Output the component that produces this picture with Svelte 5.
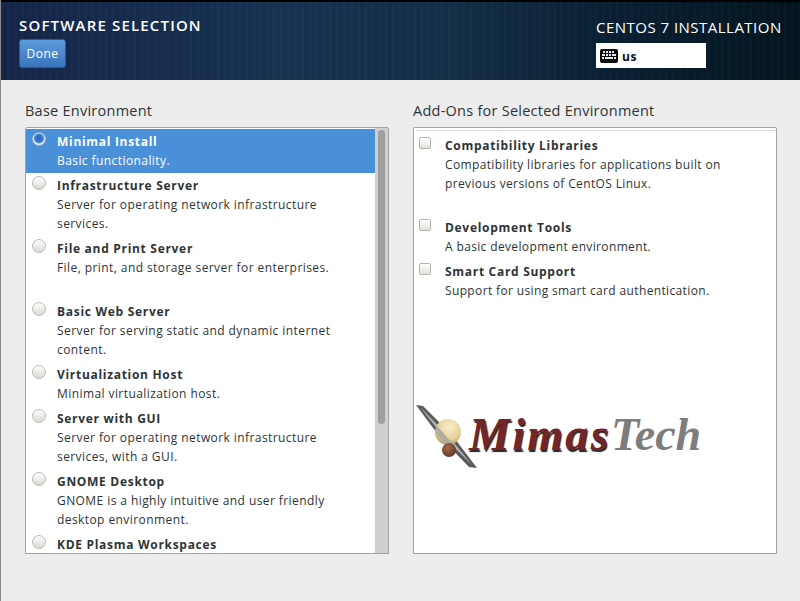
<script>
  const environments = [
    { name: "Minimal Install", desc: "Basic functionality.", selected: true },
    { name: "Infrastructure Server", desc: "Server for operating network infrastructure services." },
    { name: "File and Print Server", desc: "File, print, and storage server for enterprises.", tall: true },
    { name: "Basic Web Server", desc: "Server for serving static and dynamic internet content." },
    { name: "Virtualization Host", desc: "Minimal virtualization host." },
    { name: "Server with GUI", desc: "Server for operating network infrastructure services, with a GUI." },
    { name: "GNOME Desktop", desc: "GNOME is a highly intuitive and user friendly desktop environment." },
    { name: "KDE Plasma Workspaces", desc: "" },
  ];

  const addons = [
    { name: "Compatibility Libraries", desc: "Compatibility libraries for applications built on previous versions of CentOS Linux.", tall: true },
    { name: "Development Tools", desc: "A basic development environment." },
    { name: "Smart Card Support", desc: "Support for using smart card authentication." },
  ];
</script>

<div class="screen">
  <header class="topbar">
    <div class="left">
      <h1>SOFTWARE SELECTION</h1>
      <button class="done">Done</button>
    </div>
    <div class="right">
      <div class="product">CENTOS 7 INSTALLATION</div>
      <div class="layout-box">
        <svg viewBox="0 0 18 14" width="18" height="14">
          <rect width="18" height="14" rx="2" fill="#0c0c0c" />
          <g fill="#e8e8e8">
            <rect x="3" y="2" width="2" height="2" />
            <rect x="6" y="2" width="2" height="2" />
            <rect x="9" y="2" width="2" height="2" />
            <rect x="12" y="2" width="2" height="2" />
            <rect x="2" y="5" width="3" height="2" />
            <rect x="6" y="5" width="2" height="2" />
            <rect x="9" y="5" width="2" height="2" />
            <rect x="12" y="5" width="4" height="2" />
            <rect x="2" y="8" width="2" height="2" />
            <rect x="5" y="8" width="8" height="2" />
            <rect x="14" y="8" width="2" height="2" />
          </g>
        </svg>
        <span>us</span>
      </div>
    </div>
  </header>

  <main class="content">
    <section class="col">
      <h2>Base Environment</h2>
      <div class="list base">
        <div class="rows">
          {#each environments as env}
            <div class="row" class:selected={env.selected} class:tall={env.tall}>
              <span class="radio" class:on={env.selected}></span>
              <div class="text">
                <div class="name">{env.name}</div>
                {#if env.desc}<div class="desc">{env.desc}</div>{/if}
              </div>
            </div>
          {/each}
        </div>
        <div class="scrollbar"><div class="thumb"></div></div>
      </div>
    </section>

    <section class="col">
      <h2>Add-Ons for Selected Environment</h2>
      <div class="list addons">
        <div class="top-rule"></div>
        {#each addons as addon}
          <div class="row addon" class:tall-addon={addon.tall}>
            <span class="check"></span>
            <div class="text">
              <div class="name">{addon.name}</div>
              <div class="desc">{addon.desc}</div>
            </div>
          </div>
        {/each}

        <div class="logo">
          <svg viewBox="0 0 64 68" width="64" height="68">
            <defs>
              <radialGradient id="planet" cx="0.55" cy="0.3" r="0.8">
                <stop offset="0" stop-color="#f8eecb" />
                <stop offset="0.6" stop-color="#e6cf98" />
                <stop offset="1" stop-color="#a08a5c" />
              </radialGradient>
              <radialGradient id="moon" cx="0.4" cy="0.35" r="0.7">
                <stop offset="0" stop-color="#a8694a" />
                <stop offset="1" stop-color="#5e3526" />
              </radialGradient>
            </defs>
            <polygon points="1,0 8,1 37,30 62,63 54,62 24,31" fill="#5a5a5a" />
            <polygon points="5,2 9,6 36,34 57,60 27,30" fill="#b5b5b0" />
            <circle cx="33" cy="27" r="13" fill="url(#planet)" />
            <polygon points="21,20 38,39 32,41 21,28" fill="#aeaba0" />
            <circle cx="34" cy="45" r="7" fill="url(#moon)" />
          </svg>
          <span class="wordmark"><span class="mimas">Mimas</span><span class="tech">Tech</span></span>
        </div>
      </div>
    </section>
  </main>
</div>

<style>
  :global(body) {
    margin: 0;
    background: #ededed;
  }

  .screen {
    width: 800px;
    height: 601px;
    overflow: hidden;
    background: #ededed;
    font-family: "Open Sans", "Noto Sans", sans-serif;
    color: #2e3436;
    border-left: 1px solid #8a8a8a;
    box-sizing: border-box;
  }

  .topbar {
    height: 80px;
    box-sizing: border-box;
    border-top: 2px solid #000;
    margin-left: -1px;
    display: flex;
    justify-content: space-between;
    color: #fff;
    background:
      repeating-linear-gradient(90deg, rgba(255, 255, 255, 0.012) 0 3px, rgba(0, 0, 0, 0.03) 3px 7px),
      linear-gradient(90deg, #15264a 0%, #183352 35%, #143049 55%, #0a2135 75%, #03151f 100%);
  }

  .left {
    padding: 13px 0 0 19px;
  }

  h1 {
    margin: 0;
    font-size: 15px;
    font-weight: 600;
    line-height: 20px;
    letter-spacing: 1.17px;
  }

  .done {
    display: block;
    margin-top: 4px;
    width: 47px;
    height: 29px;
    padding: 0;
    border: 1px solid #2a5c9a;
    border-radius: 3px;
    background: linear-gradient(#5e9ade, #3a74bb);
    color: #fff;
    font: 12px "Open Sans", sans-serif;
    letter-spacing: 0.5px;
  }

  .right {
    width: 204px;
    padding-top: 15px;
  }

  .product {
    font-size: 15px;
    line-height: 20px;
    white-space: nowrap;
    letter-spacing: 0.48px;
  }

  .layout-box {
    margin-top: 6px;
    width: 110px;
    height: 25px;
    background: #fff;
    color: #111;
    display: flex;
    align-items: center;
    gap: 4px;
    padding-left: 4px;
    box-sizing: border-box;
    font-size: 12px;
    font-weight: 700;
    letter-spacing: 0.6px;
  }

  .layout-box span {
    padding-top: 2px;
  }

  .content {
    display: flex;
    gap: 24px;
    padding: 21px 0 0 24px;
  }

  .col {
    width: 364px;
  }

  h2 {
    margin: 0 0 6px;
    font-size: 14.5px;
    font-weight: 400;
    line-height: 20px;
    letter-spacing: 0.25px;
    color: #2e3436;
  }

  .list {
    height: 427px;
    box-sizing: border-box;
    border: 1px solid #a3a3a3;
    border-radius: 2px 2px 0 0;
    background: #fff;
    overflow: hidden;
  }

  .base {
    display: flex;
  }

  .rows {
    width: 349px;
    padding-top: 1px;
    flex: none;
  }

  .row {
    display: flex;
    box-sizing: border-box;
    padding: 3px 8px 3px 6px;
    gap: 11px;
    font-size: 12px;
    line-height: 19px;
    letter-spacing: 0.42px;
  }

  .row.selected {
    background: #4a90d9;
    color: #fff;
  }

  .row.tall {
    min-height: 63px;
  }

  .text {
    min-width: 0;
  }

  .name {
    font-weight: 700;
    letter-spacing: 0.7px;
  }

  .radio {
    flex: none;
    width: 14px;
    height: 14px;
    box-sizing: border-box;
    border-radius: 50%;
    border: 1px solid #bcbcb4;
    background: linear-gradient(#fff, #d8d8d2);
  }

  .radio.on {
    border-color: #9fb0c2;
    background: radial-gradient(circle at 50% 45%, #2f6fc4 0 2.5px, #4d8ede 4.5px, #e4ebf3 5.5px);
  }

  .scrollbar {
    width: 13px;
    flex: 1;
    background: #cfcfcf;
    padding: 2px 3px 0;
    box-sizing: border-box;
  }

  .thumb {
    height: 294px;
    border-radius: 4px;
    background: #9f9f9f;
  }

  .addons {
    position: relative;
    padding: 4px 0 0;
  }

  .top-rule {
    height: 1px;
    margin: -2px 0 2px 2px;
    background: #dcdcdc;
  }

  .row.addon {
    padding: 3px 50px 3px 5px;
    gap: 14px;
    letter-spacing: 0.36px;
  }

  .row.addon .name {
    letter-spacing: 0.7px;
  }

  .row.tall-addon {
    min-height: 82px;
  }

  .check {
    flex: none;
    width: 12px;
    height: 12px;
    margin-top: 1px;
    box-sizing: border-box;
    border: 1px solid #b4b4ab;
    border-radius: 2px;
    background: linear-gradient(#fff, #e2e2dc);
  }

  /* watermark sitting over the empty part of the add-ons list */
  .logo {
    position: absolute;
    left: 1px;
    top: 277px;
    display: flex;
    align-items: flex-start;
  }

  .wordmark {
    margin: 3px 0 0 -10px;
    font: italic 700 46px/54px "Liberation Serif", serif;
    white-space: nowrap;
  }

  .mimas {
    color: #72262a;
    letter-spacing: 2.3px;
    text-shadow: 1px 2px 1px #222;
  }

  .tech {
    color: #7d7d7d;
    letter-spacing: 0;
  }
</style>
